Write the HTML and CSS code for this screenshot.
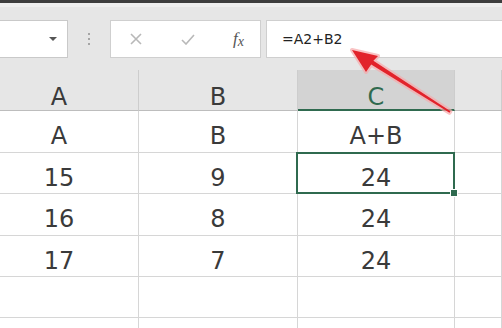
FILE: index.html
```html
<!DOCTYPE html>
<html lang="zh">
<head>
  <meta charset="UTF-8" />
  <title>公式示例</title>
  <link rel="stylesheet" href="styles.css">
</head>
<body>
  <div class="page">
    <div class="topbar"></div>
    <div class="toolbar">
      <div class="namebox"><span class="caret"></span></div>
      <div class="grip"><i></i><i></i><i></i></div>
      <div class="fbuttons">
        <svg class="icon" width="12" height="12" viewBox="0 0 12 12"><path d="M1 1 L11 11 M11 1 L1 11" /></svg>
        <svg class="icon" width="14" height="11" viewBox="0 0 14 11"><path d="M1 6 L5 10 L13 1" /></svg>
        <span class="fx">f<span class="x">x</span></span>
      </div>
      <div class="formula">=A2+B2</div>
    </div>

    <div class="sheet">
      <div class="hd">A</div>
      <div class="hd">B</div>
      <div class="hd active">C</div>
      <div class="hd"></div>

      <div class="cell">A</div>
      <div class="cell">B</div>
      <div class="cell">A+B</div>
      <div class="cell"></div>

      <div class="cell">15</div>
      <div class="cell">9</div>
      <div class="cell selected">24</div>
      <div class="cell"></div>

      <div class="cell">16</div>
      <div class="cell">8</div>
      <div class="cell">24</div>
      <div class="cell"></div>

      <div class="cell">17</div>
      <div class="cell">7</div>
      <div class="cell">24</div>
      <div class="cell"></div>

      <div class="cell"></div>
      <div class="cell"></div>
      <div class="cell"></div>
      <div class="cell"></div>

      <div class="cell"></div>
      <div class="cell"></div>
      <div class="cell"></div>
      <div class="cell"></div>
    </div>

    <!-- flecha roja -->
    <svg class="arrow" width="502" height="328" viewBox="0 0 502 328">
      <polygon class="glow" points="352,50 378,56 373.4,60.7 450.5,111.2 449.5,112.8 371.2,64.5 366,72" />
      <polygon points="352,50 378,56 373.4,60.7 450.5,111.2 449.5,112.8 371.2,64.5 366,72" />
    </svg>
  </div>
</body>
</html>
```

FILE: styles.css
```css
body {
  margin: 0;
  background: #fff;
  font-family: "DejaVu Sans", sans-serif;
  color: #3a3a3a;
}
.page {
  position: relative;
  width: 502px;
  height: 328px;
  overflow: hidden;
}
.topbar {
  height: 3px;
  background: #3d3d3d;
  border-bottom: 4px solid #eeeeee;
}
.toolbar {
  height: 63px;
  background: #e6e6e6;
  display: flex;
  align-items: flex-start;
  padding-top: 13px;
  box-sizing: border-box;
}
.namebox {
  width: 68px;
  height: 38px;
  box-sizing: border-box;
  background: #fff;
  border: 1px solid #c9c9c9;
  border-left: none;
  position: relative;
}
.caret {
  position: absolute;
  left: 49px;
  top: 16px;
  border-left: 4px solid transparent;
  border-right: 4px solid transparent;
  border-top: 4px solid #555;
}
.grip {
  width: 42px;
  height: 38px;
  display: flex;
  flex-direction: column;
  align-items: center;
  justify-content: center;
  gap: 3px;
}
.grip i {
  width: 2px;
  height: 2px;
  background: #a5a5a5;
}
.fbuttons {
  width: 151px;
  height: 38px;
  box-sizing: border-box;
  background: #fff;
  border: 1px solid #cfcfcf;
  display: flex;
  align-items: center;
  padding-left: 19px;
}
.icon {
  fill: none;
  stroke: #b8b8b8;
  stroke-width: 1.6;
}
.icon + .icon {
  margin-left: 39px;
}
.fx {
  margin-left: 38px;
  font-family: "Liberation Serif", serif;
  font-style: italic;
  font-size: 17px;
  color: #555;
}
.fx .x {
  font-size: 14px;
  position: relative;
  top: 2px;
}
.formula {
  flex: 1;
  height: 38px;
  margin-left: 5px;
  box-sizing: border-box;
  background: #fff;
  border: 1px solid #cfcfcf;
  border-right: none;
  font-size: 14px;
  line-height: 36px;
  padding-left: 15px;
  color: #222;
}
.sheet {
  margin-left: -20px;
  display: grid;
  grid-template-columns: 159px 159px 157px 1fr;
  grid-auto-rows: 41.4px;
}
.hd, .cell {
  box-sizing: border-box;
  border-right: 1px solid #d6d6d6;
  border-bottom: 1px solid #d6d6d6;
  text-align: center;
  font-size: 24px;
  line-height: 24px;
  padding-top: 13px;
}
.hd {
  height: 41px;
  background: #e6e6e6;
  border-right-color: #cdcdcd;
  border-bottom-color: #bdbdbd;
  padding-top: 15px;
}
.hd.active {
  background: #d3d3d3;
  color: #2f6a4f;
  border-bottom: 2px solid #2f6a4f;
}
.selected {
  position: relative;
}
.selected::after {
  content: "";
  position: absolute;
  left: -2px;
  top: -1px;
  right: -1px;
  bottom: -1px;
  border: 2px solid #2f6a4f;
}
.selected::before {
  content: "";
  position: absolute;
  right: -4px;
  bottom: -4px;
  width: 6px;
  height: 6px;
  background: #2f6a4f;
  border: 1px solid #fff;
  z-index: 1;
}
.arrow {
  position: absolute;
  left: 0;
  top: 0;
}
.arrow polygon {
  fill: #e2232b;
}
.arrow .glow {
  fill: none;
  stroke: #f6a9ab;
  stroke-width: 4;
  stroke-linejoin: round;
  opacity: 0.7;
}
```
